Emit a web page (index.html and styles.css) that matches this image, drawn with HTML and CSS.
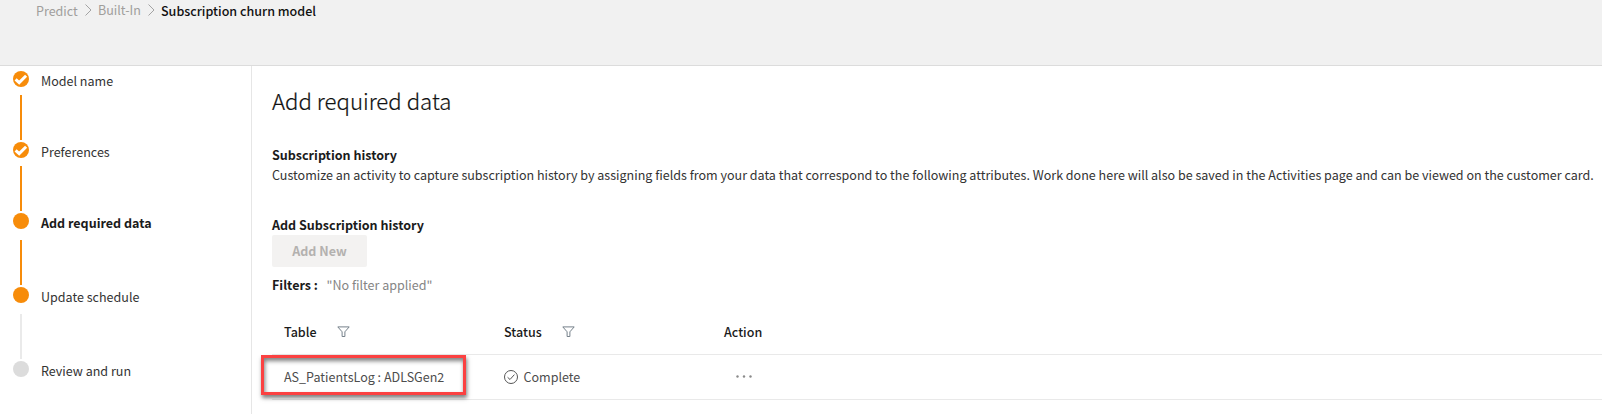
FILE: index.html
```html
<!DOCTYPE html>
<html lang="en">
<head>
<meta charset="utf-8">
<title>Subscription churn model</title>
<link rel="stylesheet" href="styles.css">
</head>
<body>
<header class="topbar">
  <nav class="breadcrumb">
    <a class="crumb crumb-predict">Predict</a>
    <svg class="chevron" width="7" height="12" viewBox="0 0 7 12"><path d="M.5.5 6 6 .5 11.500"/></svg>
    <a class="crumb crumb-builtin">Built-In</a>
    <svg class="chevron" width="7" height="12" viewBox="0 0 7 12"><path d="M.5.5 6 6 .5 11.500"/></svg>
    <span class="crumb crumb-current">Subscription churn model</span>
  </nav>
</header>
<div class="layout">
  <aside class="steps">
    <div class="step">
      <div class="rail"><svg class="dot" width="16" height="16" viewBox="0 0 16 16"><circle cx="8" cy="8" r="8"/><path d="M2.600 8.300 6.200 11.600 13.100 4.800"/></svg><i class="line"></i></div>
      <span class="label">Model name</span>
    </div>
    <div class="step">
      <div class="rail"><svg class="dot" width="16" height="16" viewBox="0 0 16 16"><circle cx="8" cy="8" r="8"/><path d="M2.600 8.300 6.200 11.600 13.100 4.800"/></svg><i class="line"></i></div>
      <span class="label">Preferences</span>
    </div>
    <div class="step step-tall">
      <div class="rail"><svg class="dot" width="16" height="16" viewBox="0 0 16 16"><circle cx="8" cy="8" r="8"/></svg><i class="line"></i></div>
      <span class="label label-active">Add required data</span>
    </div>
    <div class="step step-tall">
      <div class="rail"><svg class="dot" width="16" height="16" viewBox="0 0 16 16"><circle cx="8" cy="8" r="8"/></svg><i class="line line-pending"></i></div>
      <span class="label">Update schedule</span>
    </div>
    <div class="step">
      <div class="rail"><svg class="dot dot-pending" width="16" height="16" viewBox="0 0 16 16"><circle cx="8" cy="8" r="8"/></svg></div>
      <span class="label">Review and run</span>
    </div>
  </aside>
  <main class="content">
    <h1 class="title">Add required data</h1>
    <h2 class="subtitle">Subscription history</h2>
    <p class="description">Customize an activity to capture subscription history by assigning fields from your data that correspond to the following attributes. Work done here will also be saved in the Activities page and can be viewed on the customer card.</p>
    <h2 class="subtitle">Add Subscription history</h2>
    <button class="add-button" disabled>Add New</button>
    <div class="filters"><b class="filters-label">Filters :</b><span>"No filter applied"</span></div>
    <div class="table">
      <div class="row row-head">
        <div class="cell"><span class="th th-table">Table</span><svg class="funnel" width="13" height="12" viewBox="0 0 13 12"><path d="M.8.900H12.200L7.900 5.800V10.500H5.100V5.800Z"/></svg></div>
        <div class="cell"><span class="th th-status">Status</span><svg class="funnel" width="13" height="12" viewBox="0 0 13 12"><path d="M.8.900H12.200L7.900 5.800V10.500H5.100V5.800Z"/></svg></div>
        <div class="cell"><span class="th">Action</span></div>
      </div>
      <div class="row row-body">
        <div class="cell"><span>AS_PatientsLog : ADLSGen2</span><div class="highlight"></div></div>
        <div class="cell"><svg class="complete" width="14" height="14" viewBox="0 0 14 14"><circle cx="7" cy="7" r="6.500"/><path d="M3.600 7.300 6 9.500 10.400 4.600"/></svg><span>Complete</span></div>
        <div class="cell"><svg class="more" width="16" height="3" viewBox="0 0 16 3"><circle cx="1.500" cy="1.500" r="1.200"/><circle cx="8" cy="1.500" r="1.200"/><circle cx="14.500" cy="1.500" r="1.200"/></svg></div>
      </div>
    </div>
  </main>
</div>
</body>
</html>
```
FILE: styles.css
```css
* { box-sizing: border-box; margin: 0; padding: 0; }
body {
  width: 1602px; height: 414px; overflow: hidden; background: #fff; color: #333;
  font: 12.54px/21px "Noto Sans CJK SC", "Noto Sans", sans-serif;
  white-space: nowrap;
}
.topbar { height: 66px; background: #f1f1f1; border-bottom: 1px solid #dcdcdc; padding-left: 36px; }
.breadcrumb { display: flex; align-items: flex-start; }
.crumb { color: #a09e9c; }
.crumb-predict { width: 49px; }
.crumb-builtin { width: 50px; margin: -1px 0 0 6px; }
.crumb-current { margin-left: 6px; color: #111; font-weight: 500; }
.chevron { margin-top: 4px; fill: none; stroke: #a3a3a3; stroke-width: 1; }
.layout { display: flex; height: 348px; }
.steps { flex: none; width: 252px; padding: 5px 0 0 13px; border-right: 1px solid #e6e6e6; }
.step { display: flex; gap: 12px; height: 71px; }
.step-tall { height: 74px; }
.rail { display: flex; flex-direction: column; align-items: center; justify-content: space-between; width: 16px; padding-bottom: 2px; }
.dot { display: block; fill: #f78c0a; }
.dot path { fill: none; stroke: #fff; stroke-width: 3; }
.dot-pending { fill: #dcdcdc; }
.line { width: 2px; height: 45px; background: #f78c0a; }
.line-pending { background: #eaeaea; }
.label { margin-top: -1px; }
.label-active { font-weight: 700; color: #1b1b1b; }
.content { flex: 1; min-width: 0; padding: 18px 0 0 20px; }
.title { height: 60px; font-size: 22.2px; line-height: 33px; font-weight: 300; color: #111; -webkit-text-stroke: .2px #111; }
.subtitle { height: 20px; font-size: 12.54px; font-weight: 700; color: #1b1b1b; }
.description { height: 50px; }
.add-button {
  display: block; width: 95px; height: 32px; margin-top: 1px; border: 0; border-radius: 2px;
  background: #f3f2f1; color: #b3b1af; font: 700 12.54px/20px "Noto Sans CJK SC", sans-serif;
}
.filters { display: flex; height: 20px; margin-top: 7px; color: #858585; }
.filters-label { width: 54.500px; color: #1b1b1b; }
.table { margin-top: 12px; }
.row { display: grid; grid-template-columns: 220px 220px 1fr; padding-left: 12px; border-bottom: 1px solid #e9e9e9; }
.row-head { height: 49px; padding-top: 15px; }
.row-body { height: 45px; padding-top: 11px; color: #4d4d4d; }
.cell { display: flex; align-items: flex-start; position: relative; }
.th { color: #1b1b1b; font-weight: 500; }
.th-table { width: 52.500px; }
.th-status { width: 57.500px; }
.funnel { margin-top: 5px; fill: none; stroke: #75808a; stroke-width: 1; }
.complete { margin: 4px 5.500px 0 0; fill: none; stroke: #555; stroke-width: 1; }
.more { margin: 9px 0 0 12px; fill: #8a8a8a; }
.highlight {
  position: absolute; left: -23px; top: -11px; width: 205px; height: 40px; border: 3px solid #fb4141;
  box-shadow: 1px 3px 4px rgba(0,0,0,.5), inset 1px 3px 4px rgba(0,0,0,.5);
}
```
